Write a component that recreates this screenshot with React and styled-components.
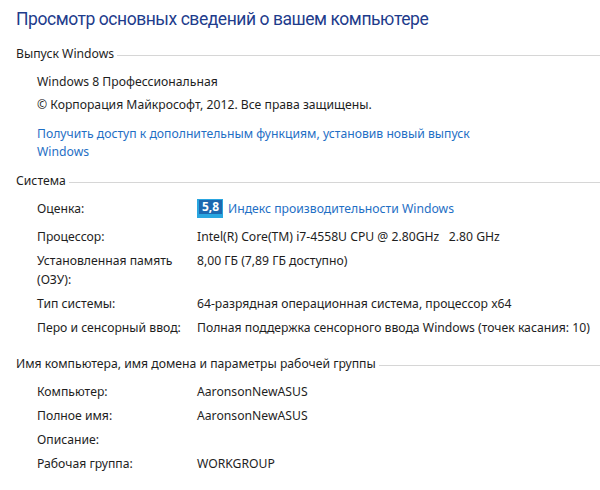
import React from "react";
import styled, { createGlobalStyle } from "styled-components";

const GlobalStyle = createGlobalStyle`
  body {
    margin: 0;
    background: #ffffff;
    font-family: "Noto Sans", "Open Sans", sans-serif;
    color: #1e1e1e;
  }
`;

const Page = styled.div`
  width: 600px;
  height: 490px;
  padding: 6px 0 0 16px;
  box-sizing: border-box;
  overflow: hidden;
`;

const Title = styled.h1`
  margin: 0 0 13px 0;
  font-family: Roboto, "Noto Sans", sans-serif;
  font-size: 17.5px;
  line-height: 26px;
  font-weight: 400;
  color: #1e3c8c;
  letter-spacing: -0.45px;
`;

const SectionHeader = styled.div`
  display: flex;
  align-items: center;
  gap: 3px;
  font-size: 12.2px;
  line-height: 18px;
  color: #1e1e1e;
  margin-top: ${({ $top }) => $top || 0}px;

  &::after {
    content: "";
    flex: 1;
    height: 1px;
    background: #d6d6d6;
    margin-top: 2px;
  }
`;

const Block = styled.div`
  padding-left: 21px;
  display: flex;
  flex-direction: column;
  gap: 5px;
  margin-top: ${({ $top }) => $top || 10}px;
`;

const Line = styled.div`
  font-size: 12.2px;
  line-height: 18px;
  color: ${({ $link }) => ($link ? "#1f6fc5" : "#1e1e1e")};
  max-width: ${({ $max }) => $max || 560}px;
  margin-top: ${({ $top }) => $top || 0}px;
`;

const Row = styled.div`
  display: grid;
  grid-template-columns: 160px 1fr;
  align-items: start;
  font-size: 12.2px;
  line-height: 19px;
  color: #1e1e1e;
  padding-bottom: ${({ $tall }) => ($tall ? 4 : 0)}px;
`;

const Label = styled.div`
  padding-right: 10px;
`;

const Value = styled.div`
  display: flex;
  align-items: center;
  gap: 5px;
  white-space: pre;
`;

const Badge = styled.span`
  display: inline-flex;
  box-sizing: border-box;
  width: 26px;
  height: 19px;
  padding: 1px 1px 0 2px;
  background: #2aa6e0;
  align-items: flex-start;
`;

const BadgeText = styled.span`
  flex: 1;
  text-align: center;
  background: #1d68b0;
  color: #ffffff;
  font-weight: 700;
  font-size: 12px;
  line-height: 14px;
`;

const Link = styled.span`
  color: #1f6fc5;
`;

const systemRows = [
  ["Процессор:", "Intel(R) Core(TM) i7-4558U CPU @ 2.80GHz   2.80 GHz"],
  ["Установленная память (ОЗУ):", "8,00 ГБ (7,89 ГБ доступно)"],
  ["Тип системы:", "64-разрядная операционная система, процессор x64"],
  ["Перо и сенсорный ввод:", "Полная поддержка сенсорного ввода Windows (точек касания: 10)"],
];

const nameRows = [
  ["Компьютер:", "AaronsonNewASUS"],
  ["Полное имя:", "AaronsonNewASUS"],
  ["Описание:", ""],
  ["Рабочая группа:", "WORKGROUP"],
];

export default function App() {
  return (
    <>
      <GlobalStyle />
      <Page>
        <Title>Просмотр основных сведений о вашем компьютере</Title>

        <SectionHeader>Выпуск Windows</SectionHeader>
        <Block $top={10}>
          <Line>Windows 8 Профессиональная</Line>
          <Line>© Корпорация Майкрософт, 2012. Все права защищены.</Line>
          <Line $link $max={450} $top={6}>
            Получить доступ к дополнительным функциям, установив новый выпуск Windows
          </Line>
        </Block>

        <SectionHeader $top={11}>Система</SectionHeader>
        <Block $top={9}>
          <Row $tall>
            <Label>Оценка:</Label>
            <Value>
              <Badge>
                <BadgeText>5,8</BadgeText>
              </Badge>
              <Link>Индекс производительности Windows</Link>
            </Value>
          </Row>
          {systemRows.map(([label, value]) => (
            <Row key={label}>
              <Label>{label}</Label>
              <Value>{value}</Value>
            </Row>
          ))}
        </Block>

        <SectionHeader $top={18}>Имя компьютера, имя домена и параметры рабочей группы</SectionHeader>
        <Block $top={9}>
          {nameRows.map(([label, value]) => (
            <Row key={label}>
              <Label>{label}</Label>
              <Value>{value}</Value>
            </Row>
          ))}
        </Block>
      </Page>
    </>
  );
}
